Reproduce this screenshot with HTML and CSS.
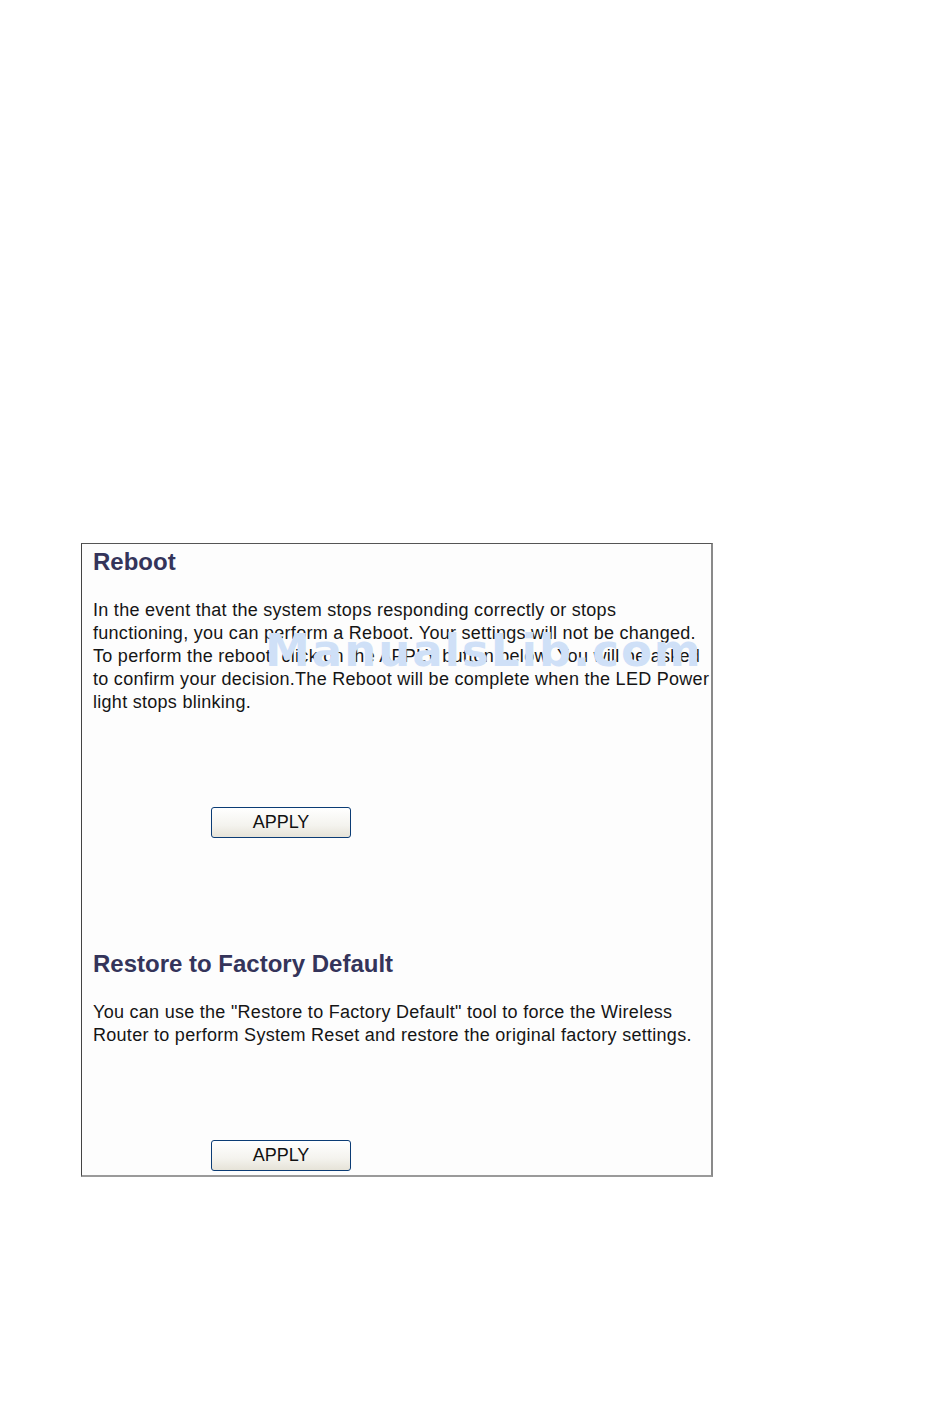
FILE: index.html
```html
<!DOCTYPE html>
<html lang="en">

<head>
    <meta charset="UTF-8">
    <title>Reboot / Restore to Factory Default</title>
    <link rel="stylesheet" href="styles.css">
</head>

<body>
    <div class="panel">
        <h2 class="section-title">Reboot</h2>
        <p class="section-text">In the event that the system stops responding correctly or stops<br>
            functioning, you can perform a Reboot. Your settings will not be changed.<br>
            To perform the reboot, click on the APPLY button below. You will be asked<br>
            to confirm your decision.The Reboot will be complete when the LED Power<br>
            light stops blinking.</p>
        <div class="button-row">
            <button class="apply-btn" type="button">APPLY</button>
        </div>

        <h2 class="section-title second">Restore to Factory Default</h2>
        <p class="section-text">You can use the "Restore to Factory Default" tool to force the Wireless<br>
            Router to perform System Reset and restore the original factory settings.</p>
        <div class="button-row">
            <button class="apply-btn" type="button">APPLY</button>
        </div>

        <div class="watermark">ManualsLib.com</div>
    </div>
</body>

</html>
```

FILE: styles.css
```css
body {
    margin: 0;
    padding: 543px 0 0 81px;
    background: #ffffff;
    font-family: "Liberation Sans", Arial, sans-serif;
}

.panel {
    position: relative;
    box-sizing: border-box;
    width: 632px;
    height: 634px;
    padding: 4px 4px 0 11px;
    background: #fdfdfd;
    border-top: 1px solid #555555;
    border-left: 1px solid #444444;
    border-right: 2px solid #8a8a8a;
    border-bottom: 2px solid #9a9a9a;
}

.section-title {
    margin: 0;
    font-size: 24px;
    line-height: 28px;
    font-weight: bold;
    color: #34345a;
}

.section-title.second {
    margin-top: 112px;
}

.section-text {
    margin: 23px 0 0 0;
    font-size: 18px;
    line-height: 23px;
    letter-spacing: 0.28px;
    color: #151515;
    white-space: nowrap;
}

.button-row {
    margin-top: 93px;
    padding-left: 118px;
}

.apply-btn {
    box-sizing: border-box;
    width: 140px;
    height: 31px;
    padding: 0;
    border: 1px solid #0b3c75;
    border-radius: 3px;
    background: linear-gradient(#ffffff, #f4f3ee 60%, #e6e3d8);
    font-family: "Liberation Sans", Arial, sans-serif;
    font-size: 18px;
    color: #111111;
}

/* watermark stamped over the scan */
.watermark {
    position: absolute;
    left: 183px;
    top: 80px;
    font-family: "DejaVu Sans", Verdana, sans-serif;
    font-weight: bold;
    font-size: 45px;
    letter-spacing: 2px;
    color: #cfe0f7;
    white-space: nowrap;
}
```
